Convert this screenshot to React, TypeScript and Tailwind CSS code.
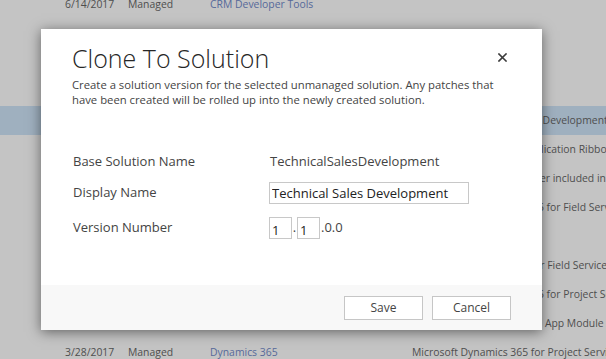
import React from "react";

type Row = { date?: string; status?: string; name?: string; desc?: string; sel?: boolean };

const rows: Row[] = [
  { date: "6/14/2017", status: "Managed", name: "CRM Developer Tools", desc: "" },
  { desc: "" },
  { desc: "" },
  { desc: "" },
  { desc: "Solution of Technical Sales Development", sel: true },
  { desc: "Solution containing all Application Ribbons" },
  { desc: "Solution metadata container included in" },
  { desc: "Solutions for Dynamics 365 for Field Service" },
  { desc: "" },
  { desc: "Resource Scheduling Kit for Field Service" },
  { desc: "Solutions for Dynamics 365 for Project Service" },
  { desc: "Dynamics 365 Field Service App Module" },
  { date: "3/28/2017", status: "Managed", name: "Dynamics 365", desc: "Microsoft Dynamics 365 for Project Service Automation" },
];

export default function App() {
  return (
    <div className="relative h-[359px] w-[606px] overflow-hidden bg-[#c4c4c4] font-['Open_Sans',sans-serif]">
      <div className="-mt-[10px] flex flex-col text-[10.4px] text-[#4e4e4e]">
        {rows.map((r, i) => (
          <div
            key={i}
            className={r.sel ? "flex h-[29px] items-center whitespace-nowrap bg-[#9fb0bf] pl-[65px]" : "flex h-[29px] items-center whitespace-nowrap pl-[65px]"}
          >
            <span className="w-[63px] shrink-0">{r.date}</span>
            <span className="w-[82px] shrink-0">{r.status}</span>
            <span className="w-[202px] shrink-0 text-[#56699a]">{r.name}</span>
            <span className="shrink-0">{r.desc}</span>
          </div>
        ))}
      </div>

      <div className="absolute left-[41px] top-[29px] z-10 flex h-[301px] w-[501px] flex-col bg-white shadow-[0_2px_12px_rgba(0,0,0,0.5)]">
        <div className="flex flex-1 flex-col pl-[31px] pr-[35px] pt-[13px]">
          <div className="flex items-start justify-between">
            <h1 className="text-[25px] font-light leading-[32px] text-[#262626]">Clone To Solution</h1>
            <button className="mt-[11px] flex h-[9px] w-[9px] items-center justify-center" aria-label="Close">
              <svg width="9" height="9" viewBox="0 0 9 9">
                <path d="M1 1L8 8M8 1L1 8" stroke="#3c3c3c" strokeWidth="1.6" strokeLinecap="square" />
              </svg>
            </button>
          </div>
          <p className="mt-[3px] text-[11.3px] leading-[15px] text-[#444444]">
            Create a solution version for the selected unmanaged solution. Any patches that
            <br />
            have been created will be rolled up into the newly created solution.
          </p>

          <div className="ml-[1px] mt-[44px] flex flex-col text-[13px] text-[#444444]">
            <div className="flex h-[22px] items-center">
              <span className="w-[196px] shrink-0">Base Solution Name</span>
              <span className="pl-[1px]">TechnicalSalesDevelopment</span>
            </div>
            <div className="mt-[9px] flex h-[22px] items-center">
              <span className="w-[196px] shrink-0">Display Name</span>
              <input
                readOnly
                defaultValue="Technical Sales Development"
                className="h-[22px] w-[200px] border border-[#c8c8c8] px-[2px] text-[13px] text-[#222222] outline-none"
              />
            </div>
            <div className="mt-[13px] flex h-[22px] items-center">
              <span className="w-[196px] shrink-0">Version Number</span>
              <input
                readOnly
                defaultValue="1"
                className="h-[22px] w-[23px] border border-[#c8c8c8] px-[2px] pt-[3px] text-[13px] text-[#222222] outline-none"
              />
              <span className="w-[5px] text-center">.</span>
              <input
                readOnly
                defaultValue="1"
                className="h-[22px] w-[23px] border border-[#c8c8c8] px-[2px] pt-[3px] text-[13px] text-[#222222] outline-none"
              />
              <span className="pl-[1px]">.0.0</span>
            </div>
          </div>
        </div>

        <div className="flex h-[45px] items-center justify-end gap-[9px] bg-[#f8f8f8] pr-[31px]">
          <button className="h-[24px] w-[79px] border border-[#c6c6c6] bg-white text-[12px] text-[#444444]">Save</button>
          <button className="h-[24px] w-[79px] border border-[#c6c6c6] bg-white text-[12px] text-[#444444]">Cancel</button>
        </div>
      </div>
    </div>
  );
}
